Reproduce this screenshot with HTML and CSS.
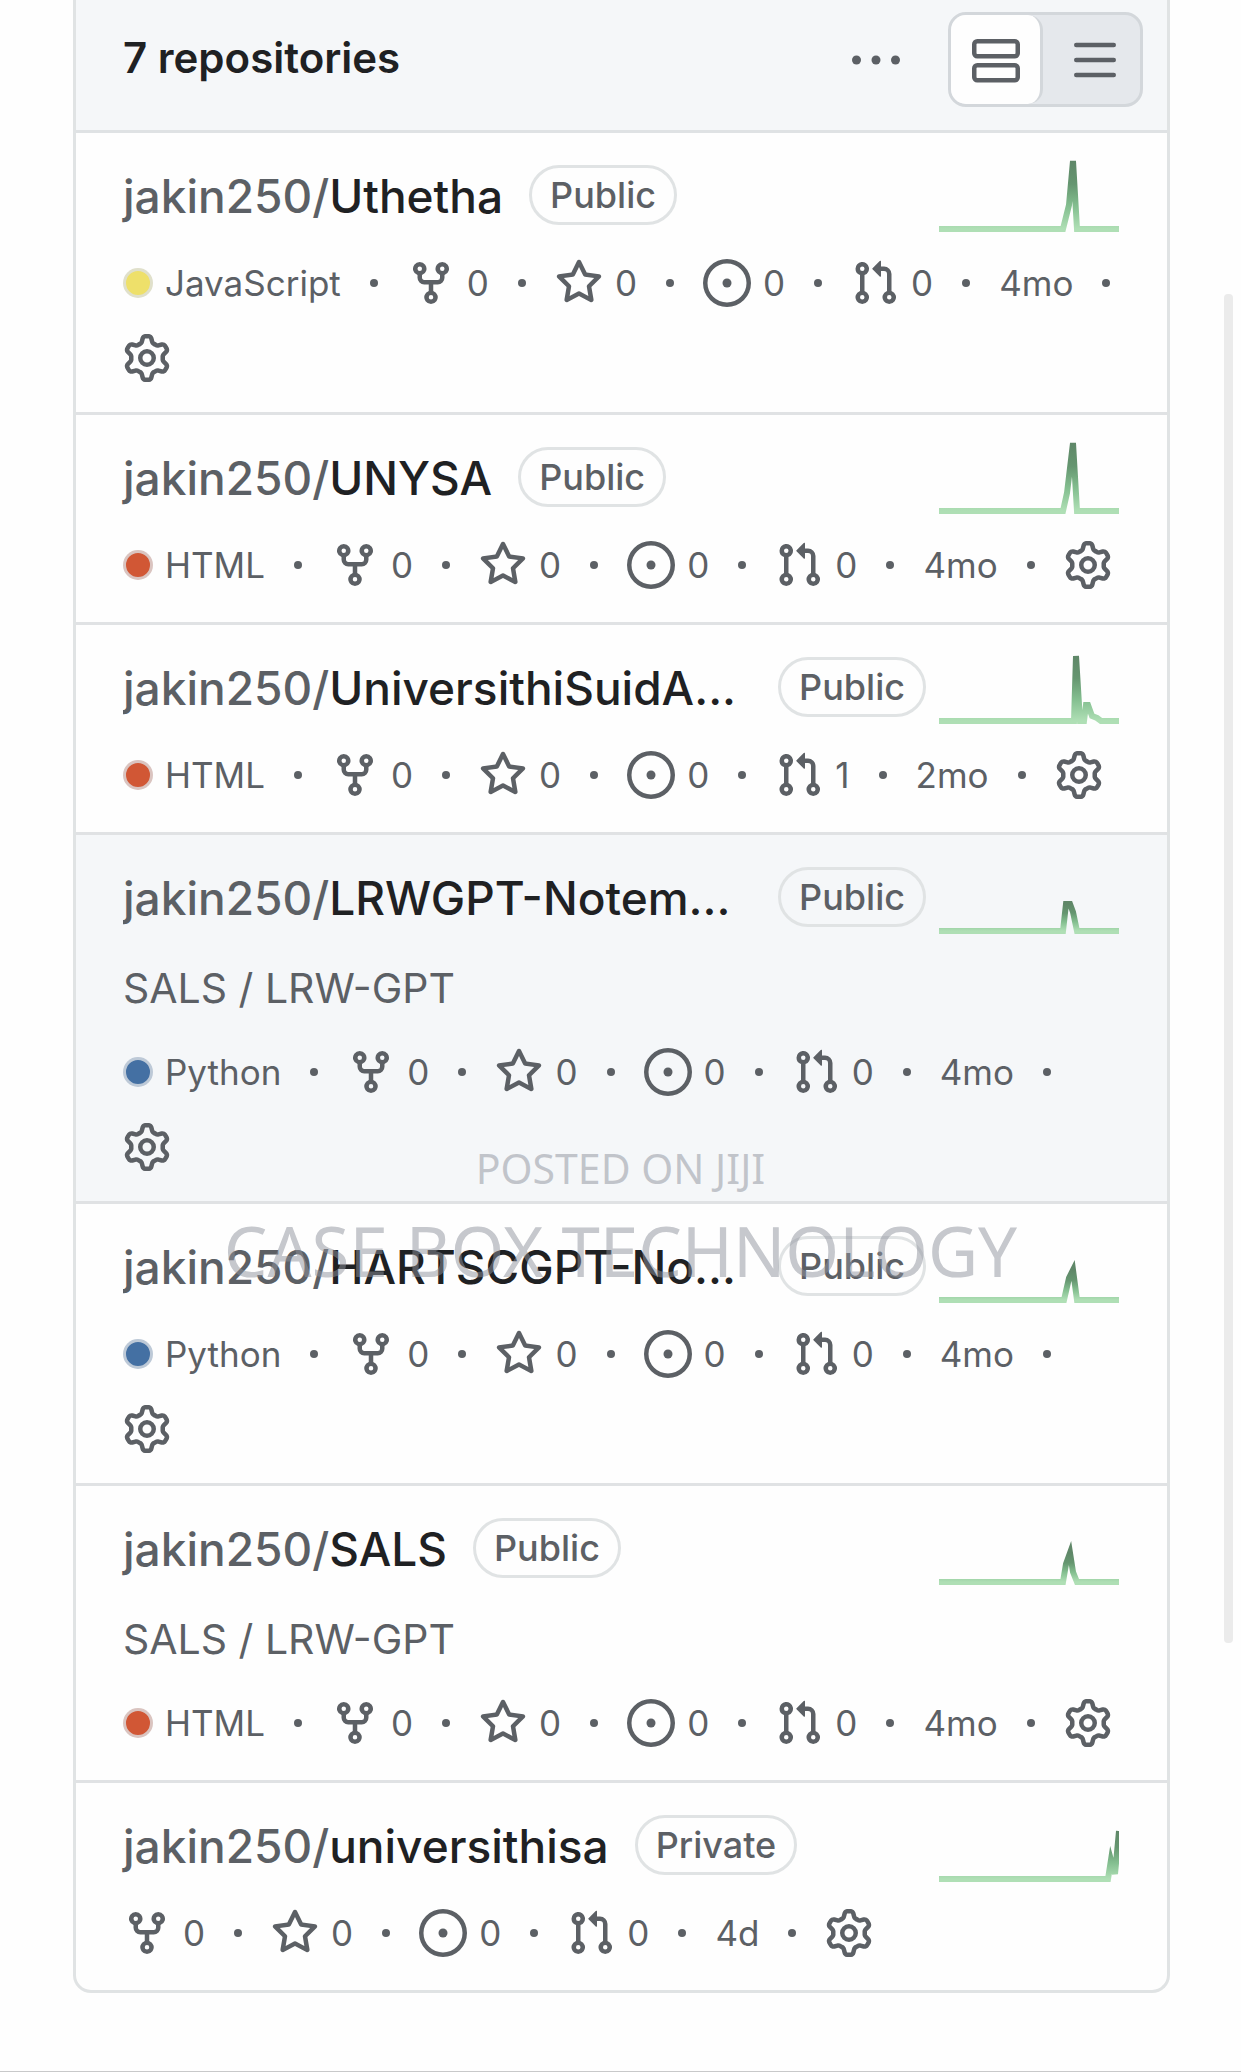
FILE: index.html
```html
<!doctype html>
<html lang="en">
<head>
  <title>Repositories</title>
  <meta charset="utf-8">
  <meta name="viewport" content="width=device-width, initial-scale=1">
  <link rel="stylesheet" href="styles.css">
</head>
<body>

<!-- Shared icons -->
<svg class="sprite" aria-hidden="true">
  <linearGradient id="sparkGradient" x1="0" x2="0" y1="1" y2="0">
    <stop offset="0%" stop-color="#afdfb5"/>
    <stop offset="33%" stop-color="#84bf90"/>
    <stop offset="66%" stop-color="#659670"/>
    <stop offset="100%" stop-color="#5f8768"/>
  </linearGradient>
  <symbol id="fork" viewBox="0 0 16 16">
    <path d="M5 5.372v.878c0 .414.336.75.75.75h4.5a.75.75 0 0 0 .75-.75v-.878a2.25 2.25 0 1 1 1.5 0v.878a2.25 2.25 0 0 1-2.25 2.25h-1.5v2.128a2.251 2.251 0 1 1-1.5 0V8.5h-1.5A2.25 2.25 0 0 1 3.5 6.25v-.878a2.25 2.25 0 1 1 1.5 0ZM5 3.25a.75.75 0 1 0-1.5 0 .75.75 0 0 0 1.5 0Zm6.75.75a.75.75 0 1 0 0-1.5.75.75 0 0 0 0 1.5Zm-3 8.75a.75.75 0 1 0-1.5 0 .75.75 0 0 0 1.5 0Z"/>
  </symbol>
  <symbol id="star" viewBox="0 0 16 16">
    <path d="M8 .25a.75.75 0 0 1 .673.418l1.882 3.815 4.21.612a.75.75 0 0 1 .416 1.279l-3.046 2.97.719 4.192a.751.751 0 0 1-1.088.791L8 12.347l-3.766 1.98a.75.75 0 0 1-1.088-.79l.72-4.194L.818 6.374a.75.75 0 0 1 .416-1.28l4.21-.611L7.327.668A.75.75 0 0 1 8 .25Zm0 2.445L6.615 5.5a.75.75 0 0 1-.564.41l-3.097.45 2.24 2.184a.75.75 0 0 1 .216.664l-.528 3.084 2.769-1.456a.75.75 0 0 1 .698 0l2.77 1.456-.53-3.084a.75.75 0 0 1 .216-.664l2.24-2.183-3.096-.45a.75.75 0 0 1-.564-.41L8 2.694Z"/>
  </symbol>
  <symbol id="issue" viewBox="0 0 16 16">
    <path d="M8 9.5a1.5 1.5 0 1 0 0-3 1.5 1.5 0 0 0 0 3Z"/>
    <path d="M8 0a8 8 0 1 1 0 16A8 8 0 0 1 8 0ZM1.5 8a6.5 6.5 0 1 0 13 0 6.5 6.5 0 0 0-13 0Z"/>
  </symbol>
  <symbol id="pull" viewBox="0 0 16 16">
    <path d="M1.5 3.25a2.25 2.25 0 1 1 3 2.122v5.256a2.251 2.251 0 1 1-1.5 0V5.372A2.25 2.25 0 0 1 1.5 3.25Zm5.677-.177L9.573.677A.25.25 0 0 1 10 .854V2.5h1A2.5 2.5 0 0 1 13.5 5v5.628a2.251 2.251 0 1 1-1.5 0V5a1 1 0 0 0-1-1h-1v1.646a.25.25 0 0 1-.427.177L7.177 3.427a.25.25 0 0 1 0-.354ZM3.75 2.5a.75.75 0 1 0 0 1.5.75.75 0 0 0 0-1.5Zm0 9.5a.75.75 0 1 0 0 1.5.75.75 0 0 0 0-1.5Zm8.25.75a.75.75 0 1 0 1.5 0 .75.75 0 0 0-1.5 0Z"/>
  </symbol>
  <symbol id="gear" viewBox="0 0 16 16">
    <path d="M8 0a8.2 8.2 0 0 1 .701.031C9.444.095 9.99.645 10.16 1.29l.288 1.107c.018.066.079.158.212.224.231.114.454.243.668.386.123.082.233.09.299.071l1.103-.303c.644-.176 1.392.021 1.82.63.27.385.506.792.704 1.218.315.675.111 1.422-.364 1.891l-.814.806c-.049.048-.098.147-.088.294.016.257.016.515 0 .772-.01.147.038.246.088.294l.814.806c.475.469.679 1.216.364 1.891a7.977 7.977 0 0 1-.704 1.217c-.428.61-1.176.807-1.82.63l-1.102-.302c-.067-.019-.177-.011-.3.071a5.909 5.909 0 0 1-.668.386c-.133.066-.194.158-.211.224l-.29 1.106c-.168.646-.715 1.196-1.458 1.26a8.006 8.006 0 0 1-1.402 0c-.743-.064-1.289-.614-1.458-1.26l-.289-1.106c-.018-.066-.079-.158-.212-.224a5.738 5.738 0 0 1-.668-.386c-.123-.082-.233-.09-.299-.071l-1.103.303c-.644.176-1.392-.021-1.82-.63a8.12 8.12 0 0 1-.704-1.218c-.315-.675-.111-1.422.363-1.891l.815-.806c.05-.048.098-.147.088-.294a6.214 6.214 0 0 1 0-.772c.01-.147-.038-.246-.088-.294l-.815-.806C.635 6.045.431 5.298.746 4.623a7.92 7.92 0 0 1 .704-1.217c.428-.61 1.176-.807 1.82-.63l1.102.302c.067.019.177.011.3-.071.214-.143.437-.272.668-.386.133-.066.194-.158.211-.224l.29-1.106C6.009.645 6.556.095 7.299.03 7.53.01 7.764 0 8 0Zm-.571 1.525c-.036.003-.108.036-.137.146l-.289 1.105c-.147.561-.549.967-.998 1.189-.173.086-.34.183-.5.29-.417.278-.97.423-1.529.27l-1.103-.303c-.109-.03-.175.016-.195.045-.22.312-.412.644-.573.99-.014.031-.021.11.059.19l.815.806c.411.406.562.957.53 1.456a4.709 4.709 0 0 0 0 .582c.032.499-.119 1.05-.53 1.456l-.815.806c-.081.08-.073.159-.059.19.162.346.353.677.573.989.02.03.085.076.195.046l1.102-.303c.56-.153 1.113-.008 1.53.27.161.107.328.204.501.29.447.222.85.629.997 1.189l.289 1.105c.029.109.101.143.137.146a6.6 6.6 0 0 0 1.142 0c.036-.003.108-.036.137-.146l.289-1.105c.147-.561.549-.967.998-1.189.173-.086.34-.183.5-.29.417-.278.97-.423 1.529-.27l1.103.303c.109.029.175-.016.195-.045.22-.313.411-.644.573-.99.014-.031.021-.11-.059-.19l-.815-.806c-.411-.406-.562-.957-.53-1.456a4.709 4.709 0 0 0 0-.582c-.032-.499.119-1.05.53-1.456l.815-.806c.081-.08.073-.159.059-.19a6.464 6.464 0 0 0-.573-.989c-.02-.03-.085-.076-.195-.046l-1.102.303c-.56.153-1.113.008-1.53-.27a4.44 4.44 0 0 0-.501-.29c-.447-.222-.85-.629-.997-1.189l-.289-1.105c-.029-.11-.101-.143-.137-.146a6.6 6.6 0 0 0-1.142 0ZM11 8a3 3 0 1 1-6 0 3 3 0 0 1 6 0ZM9.5 8a1.5 1.5 0 1 0-3.001.001A1.5 1.5 0 0 0 9.5 8Z"/>
  </symbol>
</svg>

<main class="repos">
  <header class="reposHeader">
    <h1 class="reposCount">7 repositories</h1>
    <button class="menuButton" aria-label="More options">
      <svg class="icon" viewBox="0 0 16 16"><circle cx="1.5" cy="8" r="1.5"/><circle cx="8" cy="8" r="1.5"/><circle cx="14.5" cy="8" r="1.5"/></svg>
    </button>
    <div class="viewSwitch">
      <button class="viewButton viewSelected" aria-label="Comfortable view" aria-pressed="true">
        <svg class="icon iconLine" viewBox="0 0 16 16"><rect x=".75" y="1.75" width="14.5" height="5" rx="1"/><rect x=".75" y="9.75" width="14.5" height="5" rx="1"/></svg>
      </button>
      <button class="viewButton viewCompact" aria-label="Compact view" aria-pressed="false">
        <svg class="icon iconLine" viewBox="0 0 16 16"><path d="M1.75 3h12.5M1.75 8h12.5M1.75 13h12.5"/></svg>
      </button>
    </div>
  </header>

  <ul class="repoList">
    <li class="repo">
      <div class="repoHead">
        <a class="repoName" href="#"><span class="owner">jakin250/</span>Uthetha</a>
        <span class="label">Public</span>
        <svg class="spark" viewBox="0 0 180 72"><polyline points="0,69 124,69 130,45 134,1 138,69 180,69"/></svg>
      </div>
      <div class="meta">
        <span class="metaItem"><span class="language javascript"></span>JavaScript</span><i class="dot"></i>
        <a class="metaItem" href="#" aria-label="0 forks"><svg class="icon"><use href="#fork"/></svg>0</a><i class="dot"></i>
        <a class="metaItem" href="#" aria-label="0 stars"><svg class="icon"><use href="#star"/></svg>0</a><i class="dot"></i>
        <a class="metaItem" href="#" aria-label="0 issues"><svg class="icon"><use href="#issue"/></svg>0</a><i class="dot"></i>
        <a class="metaItem" href="#" aria-label="0 pull requests"><svg class="icon"><use href="#pull"/></svg>0</a><i class="dot"></i>
        <span class="metaItem">4mo</span><i class="dot"></i>
        <a class="metaItem settings" href="#" aria-label="Settings"><svg class="icon"><use href="#gear"/></svg></a>
      </div>
    </li>

    <li class="repo">
      <div class="repoHead">
        <a class="repoName" href="#"><span class="owner">jakin250/</span>UNYSA</a>
        <span class="label">Public</span>
        <svg class="spark" viewBox="0 0 180 72"><polyline points="0,69 124,69 128,51 134,1 138,69 180,69"/></svg>
      </div>
      <div class="meta">
        <span class="metaItem"><span class="language html"></span>HTML</span><i class="dot"></i>
        <a class="metaItem" href="#" aria-label="0 forks"><svg class="icon"><use href="#fork"/></svg>0</a><i class="dot"></i>
        <a class="metaItem" href="#" aria-label="0 stars"><svg class="icon"><use href="#star"/></svg>0</a><i class="dot"></i>
        <a class="metaItem" href="#" aria-label="0 issues"><svg class="icon"><use href="#issue"/></svg>0</a><i class="dot"></i>
        <a class="metaItem" href="#" aria-label="0 pull requests"><svg class="icon"><use href="#pull"/></svg>0</a><i class="dot"></i>
        <span class="metaItem">4mo</span><i class="dot"></i>
        <a class="metaItem settings" href="#" aria-label="Settings"><svg class="icon"><use href="#gear"/></svg></a>
      </div>
    </li>

    <li class="repo">
      <div class="repoHead">
        <a class="repoName repoNameLong" href="#"><span class="owner">jakin250/</span>UniversithiSuidA...</a>
        <span class="label">Public</span>
        <svg class="spark" viewBox="0 0 180 72"><polyline points="0,69 135,69 137,4 141,69 145,69 147,53 149,53 153,64 158,66 162,69 180,69"/></svg>
      </div>
      <div class="meta">
        <span class="metaItem"><span class="language html"></span>HTML</span><i class="dot"></i>
        <a class="metaItem" href="#" aria-label="0 forks"><svg class="icon"><use href="#fork"/></svg>0</a><i class="dot"></i>
        <a class="metaItem" href="#" aria-label="0 stars"><svg class="icon"><use href="#star"/></svg>0</a><i class="dot"></i>
        <a class="metaItem" href="#" aria-label="0 issues"><svg class="icon"><use href="#issue"/></svg>0</a><i class="dot"></i>
        <a class="metaItem" href="#" aria-label="1 pull request"><svg class="icon"><use href="#pull"/></svg>1</a><i class="dot"></i>
        <span class="metaItem">2mo</span><i class="dot"></i>
        <a class="metaItem settings" href="#" aria-label="Settings"><svg class="icon"><use href="#gear"/></svg></a>
      </div>
    </li>

    <li class="repo repoActive">
      <div class="repoHead">
        <a class="repoName repoNameLong" href="#"><span class="owner">jakin250/</span>LRWGPT-Notem...</a>
        <span class="label">Public</span>
        <svg class="spark" viewBox="0 0 180 72"><polyline points="0,69 124,69 127,42 131,42 134,50 138,69 180,69"/></svg>
      </div>
      <p class="description">SALS / LRW-GPT</p>
      <div class="meta">
        <span class="metaItem"><span class="language python"></span>Python</span><i class="dot"></i>
        <a class="metaItem" href="#" aria-label="0 forks"><svg class="icon"><use href="#fork"/></svg>0</a><i class="dot"></i>
        <a class="metaItem" href="#" aria-label="0 stars"><svg class="icon"><use href="#star"/></svg>0</a><i class="dot"></i>
        <a class="metaItem" href="#" aria-label="0 issues"><svg class="icon"><use href="#issue"/></svg>0</a><i class="dot"></i>
        <a class="metaItem" href="#" aria-label="0 pull requests"><svg class="icon"><use href="#pull"/></svg>0</a><i class="dot"></i>
        <span class="metaItem">4mo</span><i class="dot"></i>
        <a class="metaItem settings" href="#" aria-label="Settings"><svg class="icon"><use href="#gear"/></svg></a>
      </div>
    </li>

    <li class="repo">
      <div class="repoHead">
        <a class="repoName repoNameLong" href="#"><span class="owner">jakin250/</span>HARTSCGPT-No...</a>
        <span class="label">Public</span>
        <svg class="spark" viewBox="0 0 180 72"><polyline points="0,69 125,69 130,47 134,39 138,69 180,69"/></svg>
      </div>
      <div class="meta">
        <span class="metaItem"><span class="language python"></span>Python</span><i class="dot"></i>
        <a class="metaItem" href="#" aria-label="0 forks"><svg class="icon"><use href="#fork"/></svg>0</a><i class="dot"></i>
        <a class="metaItem" href="#" aria-label="0 stars"><svg class="icon"><use href="#star"/></svg>0</a><i class="dot"></i>
        <a class="metaItem" href="#" aria-label="0 issues"><svg class="icon"><use href="#issue"/></svg>0</a><i class="dot"></i>
        <a class="metaItem" href="#" aria-label="0 pull requests"><svg class="icon"><use href="#pull"/></svg>0</a><i class="dot"></i>
        <span class="metaItem">4mo</span><i class="dot"></i>
        <a class="metaItem settings" href="#" aria-label="Settings"><svg class="icon"><use href="#gear"/></svg></a>
      </div>
    </li>

    <li class="repo">
      <div class="repoHead">
        <a class="repoName" href="#"><span class="owner">jakin250/</span>SALS</a>
        <span class="label">Public</span>
        <svg class="spark" viewBox="0 0 180 72"><polyline points="0,69 124,69 127,51 131,40 134,59 138,69 180,69"/></svg>
      </div>
      <p class="description">SALS / LRW-GPT</p>
      <div class="meta">
        <span class="metaItem"><span class="language html"></span>HTML</span><i class="dot"></i>
        <a class="metaItem" href="#" aria-label="0 forks"><svg class="icon"><use href="#fork"/></svg>0</a><i class="dot"></i>
        <a class="metaItem" href="#" aria-label="0 stars"><svg class="icon"><use href="#star"/></svg>0</a><i class="dot"></i>
        <a class="metaItem" href="#" aria-label="0 issues"><svg class="icon"><use href="#issue"/></svg>0</a><i class="dot"></i>
        <a class="metaItem" href="#" aria-label="0 pull requests"><svg class="icon"><use href="#pull"/></svg>0</a><i class="dot"></i>
        <span class="metaItem">4mo</span><i class="dot"></i>
        <a class="metaItem settings" href="#" aria-label="Settings"><svg class="icon"><use href="#gear"/></svg></a>
      </div>
    </li>

    <li class="repo">
      <div class="repoHead">
        <a class="repoName" href="#"><span class="owner">jakin250/</span>universithisa</a>
        <span class="label">Private</span>
        <svg class="spark" viewBox="0 0 180 72"><polyline points="0,69 169,69 172,50 176,64 180,21"/></svg>
      </div>
      <div class="meta">
        <a class="metaItem" href="#" aria-label="0 forks"><svg class="icon"><use href="#fork"/></svg>0</a><i class="dot"></i>
        <a class="metaItem" href="#" aria-label="0 stars"><svg class="icon"><use href="#star"/></svg>0</a><i class="dot"></i>
        <a class="metaItem" href="#" aria-label="0 issues"><svg class="icon"><use href="#issue"/></svg>0</a><i class="dot"></i>
        <a class="metaItem" href="#" aria-label="0 pull requests"><svg class="icon"><use href="#pull"/></svg>0</a><i class="dot"></i>
        <span class="metaItem">4d</span><i class="dot"></i>
        <a class="metaItem settings" href="#" aria-label="Settings"><svg class="icon"><use href="#gear"/></svg></a>
      </div>
    </li>
  </ul>
</main>

<div class="watermark">
  <span class="watermarkSmall">POSTED ON JIJI</span>
  <span class="watermarkLarge">CASE BOX TECHNOLOGY</span>
</div>
<div class="scrollThumb"></div>

</body>
</html>
```
FILE: styles.css
```css
* {
  box-sizing: border-box;
}

body {
  position: relative;
  min-height: 100vh;
  margin: 0;
  padding: 0 71px 0 73px;
  border-bottom: 1px solid #c8c9ca;
  background-color: #fefefe;
  color: #1f2123;
  font-family: Inter, "Liberation Sans", sans-serif;
}

a {
  color: inherit;
  text-decoration: none;
}

button {
  display: flex;
  align-items: center;
  justify-content: center;
  padding: 0;
  border: 0;
  background: none;
  color: inherit;
}

.sprite {
  position: absolute;
  width: 0;
  height: 0;
}

.icon {
  flex: none;
  width: 48px;
  height: 48px;
  overflow: visible;
  fill: #5c6065;
}

.iconLine {
  fill: none;
  stroke: #5c6065;
  stroke-width: 1.5;
  stroke-linecap: round;
}

.repos {
  border: 3px solid #e0e3e4;
  border-top: 0;
  border-radius: 0 0 18px 18px;
  overflow: hidden;
}

/* Header */
.reposHeader {
  display: flex;
  align-items: center;
  padding: 12px 24px 23px 47px;
  border-bottom: 3px solid #dfe2e4;
  background-color: #f5f7f9;
}

.reposCount {
  flex: 1;
  margin: 0 0 3px;
  font-size: 42px;
  font-weight: 600;
  line-height: 60px;
}

.menuButton {
  margin-right: 48px;
}

.viewSwitch {
  display: flex;
  height: 95px;
  border: 3px solid #d3d7db;
  border-radius: 18px;
  background-color: #e5e8ec;
}

.viewButton {
  width: 97px;
}

.viewSelected {
  width: 92px;
  border-right: 3px solid #d3d7db;
  border-radius: 15px;
  background-color: #fefefe;
}

.viewCompact {
  padding-left: 6px;
}

/* List */
.repoList {
  margin: 0;
  padding: 0;
  list-style: none;
}

.repo {
  padding: 27px 48px 33px 47px;
  border-bottom: 3px solid #e0e2e4;
}

.repo:last-child {
  border-bottom: 0;
}

.repoActive {
  background-color: #f5f7f9;
}

.repoHead {
  display: flex;
  align-items: center;
  height: 72px;
}

.repoName {
  margin-right: 26px;
  font-size: 46px;
  font-weight: 500;
  line-height: 60px;
  white-space: nowrap;
}

.repoNameLong {
  flex: 1;
  min-width: 0;
  overflow: hidden;
}

.owner {
  color: #5c6065;
}

.label {
  margin-bottom: 2px;
  padding: 0 18px;
  border: 3px solid #e0e3e4;
  border-radius: 30px;
  color: #5c6065;
  font-size: 36px;
  font-weight: 500;
  line-height: 54px;
}

.spark {
  flex: none;
  width: 180px;
  height: 72px;
  margin-left: auto;
  fill: none;
  stroke: url(#sparkGradient);
  stroke-width: 6;
  stroke-miterlimit: 5;
}

.repoNameLong ~ .spark {
  margin-left: 13px;
}

.description {
  margin: 24px 0 30px;
  color: #5c6065;
  font-size: 41px;
  line-height: 60px;
}

.meta {
  display: flex;
  flex-wrap: wrap;
  align-items: center;
  gap: 30px 29px;
  color: #5c6065;
  font-size: 35px;
  line-height: 48px;
}

.repoHead + .meta {
  margin-top: 27px;
}

.metaItem {
  display: flex;
  align-items: center;
  gap: 12px;
}

.settings {
  height: 42px;
}

.dot {
  width: 8px;
  height: 8px;
  border-radius: 50%;
  background-color: #5c6065;
}

.language {
  width: 30px;
  height: 30px;
  border: 3px solid rgba(220, 224, 228, 0.8);
  border-radius: 50%;
}

.javascript {
  background-color: #eee06a;
}

.html {
  background-color: #d15735;
}

.python {
  background-color: #4470a3;
}

/* Overlays */
.watermark {
  position: absolute;
  top: 1144px;
  right: 0;
  left: 0;
  display: flex;
  flex-direction: column;
  align-items: center;
  color: rgba(142, 146, 156, 0.5);
  font-family: "Noto Sans", sans-serif;
  white-space: nowrap;
  pointer-events: none;
}

.watermarkSmall {
  font-size: 41px;
  line-height: 48px;
}

.watermarkLarge {
  font-size: 69px;
  line-height: 116px;
}

.scrollThumb {
  position: absolute;
  top: 294px;
  right: 8px;
  width: 9px;
  height: 1349px;
  border-radius: 4px;
  background-color: #ebebeb;
}
```
